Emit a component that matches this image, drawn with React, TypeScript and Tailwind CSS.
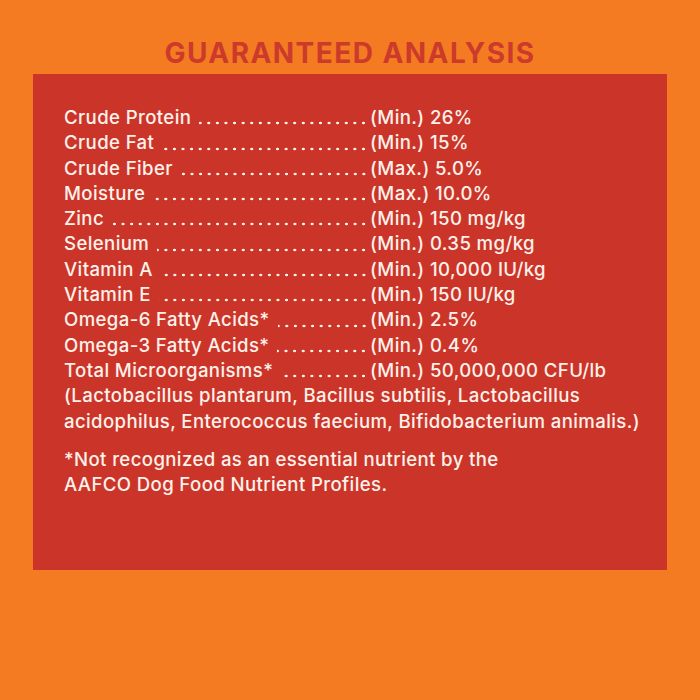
import React from "react";

const rows: [string, string][] = [
  ["Crude Protein", "(Min.) 26%"],
  ["Crude Fat", "(Min.) 15%"],
  ["Crude Fiber", "(Max.) 5.0%"],
  ["Moisture", "(Max.) 10.0%"],
  ["Zinc", "(Min.) 150 mg/kg"],
  ["Selenium", "(Min.) 0.35 mg/kg"],
  ["Vitamin A", "(Min.) 10,000 IU/kg"],
  ["Vitamin E", "(Min.) 150 IU/kg"],
  ["Omega-6 Fatty Acids*", "(Min.) 2.5%"],
  ["Omega-3 Fatty Acids*", "(Min.) 0.4%"],
  ["Total Microorganisms*", "(Min.) 50,000,000 CFU/lb"],
];

export default function App() {
  return (
    <div
      className="w-[700px] h-[700px] bg-[#f47b22] flex flex-col items-center"
      style={{ fontFamily: "Inter, 'Open Sans', sans-serif" }}
    >
      <h1 className="mt-[36px] h-[38px] text-[28px] leading-[34px] font-bold tracking-[1.45px] text-[#cc3a2b]">
        GUARANTEED ANALYSIS
      </h1>
      <div className="w-[634px] h-[496px] bg-[#cb3529] px-[31px] pt-[31px] text-[18.6px] tracking-[0.38px] font-medium leading-[25.3px] text-[#fdf1ea]">
        {rows.map(([label, value]) => (
          <div key={label} className="flex whitespace-nowrap">
            <div className="w-[306px] flex">
              <span className="pr-[8px]">{label}</span>
              <span className="flex-1 mr-[2px] bg-[radial-gradient(circle,#fdf1ea_1.2px,transparent_1.6px)] bg-[length:8.6px_4px] bg-repeat-x bg-[position:right_bottom_5px]" />
            </div>
            <span>{value}</span>
          </div>
        ))}
        <div className="whitespace-nowrap">
          (Lactobacillus plantarum, Bacillus subtilis, Lactobacillus
          <br />
          acidophilus, Enterococcus faecium, Bifidobacterium animalis.)
        </div>
        <div className="mt-[13px] whitespace-nowrap">
          *Not recognized as an essential nutrient by the
          <br />
          AAFCO Dog Food Nutrient Profiles.
        </div>
      </div>
    </div>
  );
}
